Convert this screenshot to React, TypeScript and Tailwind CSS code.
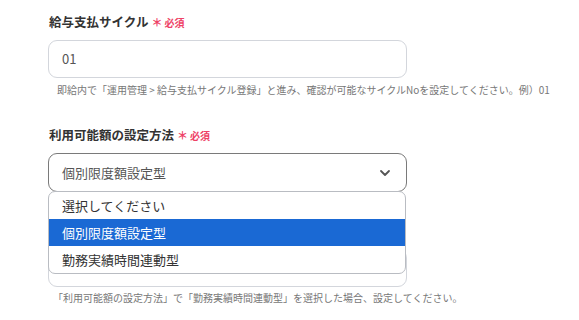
function Label({ text }: { text: string }) {
  return (
    <div className="flex h-[20px] items-center gap-[3px] pl-px">
      <span className="text-[12.5px] font-bold text-[#333333]">{text}</span>
      <span className="flex items-center gap-[2px] text-[10px] font-bold text-[#ee4266]">
        <span className="text-[11px] leading-none">＊</span>
        <span>必須</span>
      </span>
    </div>
  )
}

function Chevron() {
  return (
    <svg width="12" height="8" viewBox="0 0 12 8" fill="none">
      <path d="M2 2l4 4 4-4" stroke="#555" strokeWidth="1.8" strokeLinecap="round" strokeLinejoin="round" />
    </svg>
  )
}

export default function App() {
  const options = ['選択してください', '個別限度額設定型', '勤務実績時間連動型']
  const selected = 1

  return (
    <div
      className="h-[320px] w-[579px] overflow-hidden bg-white pl-[48px] pt-[12px]"
      style={{ fontFamily: '"Noto Sans CJK JP", "Noto Sans", sans-serif' }}
    >
      <div className="w-[359px]">
        {/* 給与支払サイクル */}
        <Label text="給与支払サイクル" />
        <div className="mt-[8px] flex h-[38px] items-center rounded-[9px] border border-[#d3d6dc] px-[13px] text-[13px] text-[#555555]">
          01
        </div>
        <p className="mt-[4px] h-[16px] whitespace-nowrap pl-[9px] text-[10px] leading-[16px] text-[#777777]">
          即給内で「運用管理 &gt; 給与支払サイクル登録」と進み、確認が可能なサイクルNoを設定してください。例）01
        </p>

        {/* 利用可能額の設定方法 */}
        <div className="mt-[27px]">
          <Label text="利用可能額の設定方法" />
          <div className="relative mt-[8px]">
            <div className="flex h-[39px] items-center justify-between rounded-[9px] border border-[#7a7a7a] pl-[13px] pr-[15px] text-[13px] text-[#555555]">
              <span>個別限度額設定型</span>
              <Chevron />
            </div>
            <ul className="absolute left-0 right-px top-[38px] z-10 overflow-hidden rounded-[7px] border border-[#b9bcc2] bg-white">
              {options.map((o, i) => (
                <li
                  key={o}
                  className={
                    i === selected
                      ? 'flex h-[27px] items-center bg-[#1a69d4] pl-[13px] text-[13px] text-white'
                      : 'flex h-[27px] items-center pl-[13px] text-[13px] text-[#333333]'
                  }
                >
                  {o}
                </li>
              ))}
            </ul>
          </div>
        </div>

        {/* third field, covered by the open dropdown */}
        <div className="mt-[29px]">
          <div className="h-[20px]" />
          <div className="mt-[8px] h-[38px] rounded-[9px] border border-[#d3d6dc]" />
          <p className="mt-[3px] h-[16px] whitespace-nowrap pl-[5px] text-[10px] leading-[16px] text-[#777777]">
            「利用可能額の設定方法」で「勤務実績時間連動型」を選択した場合、設定してください。
          </p>
        </div>
      </div>
    </div>
  )
}
